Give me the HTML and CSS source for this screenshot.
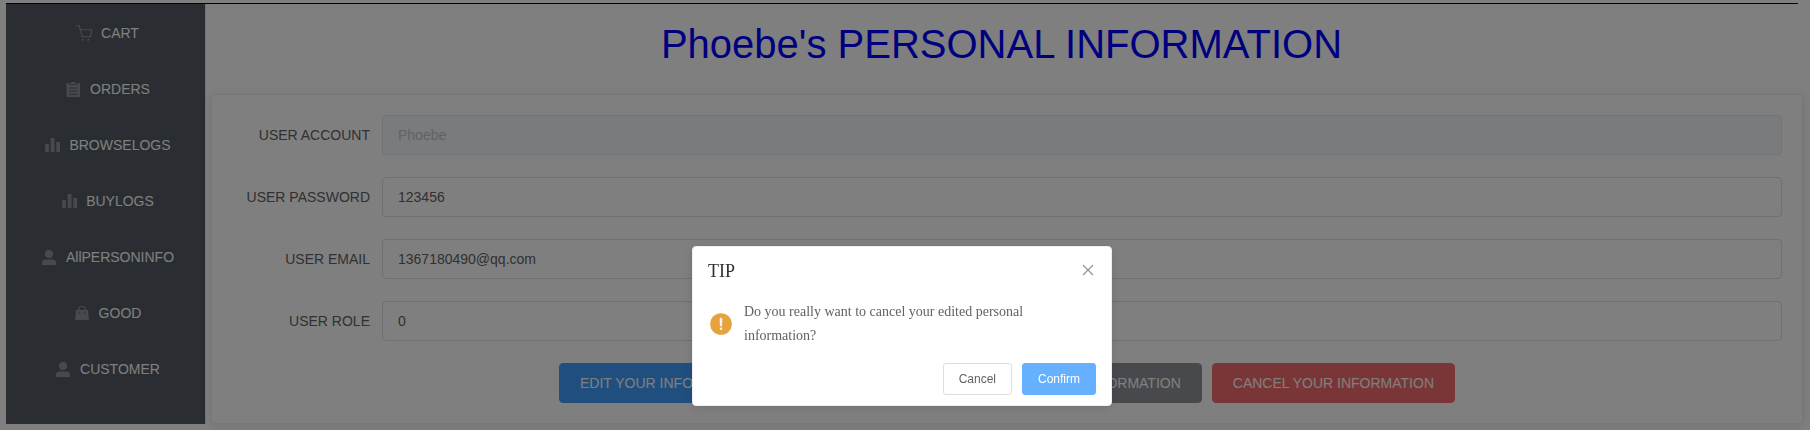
FILE: index.html
```html
<!DOCTYPE html>
<html lang="en">
<head>
<meta charset="utf-8">
<title>Personal Information</title>
<link rel="stylesheet" href="styles.css">
</head>
<body>
<svg class="sprite" aria-hidden="true">
  <symbol id="cart" viewBox="0 0 24 24"><path d="M4 5.800h3.200l3.100 11h8.100l1.400-7H8.400" fill="none" stroke="currentColor" stroke-width="1.100"/><circle cx="10.900" cy="19.800" r="1" fill="currentColor"/><circle cx="16.400" cy="19.800" r="1" fill="currentColor"/></symbol>
  <symbol id="order" viewBox="0 0 24 24"><path fill="currentColor" fill-rule="evenodd" d="M6.500 7H8v2h8.500V7H18q1 0 1 1v12q0 1-1 1H6.500q-1 0-1-1V8q0-1 1-1zM8 11.500v1h8.500v-1zM8 14.500v1h8.500v-1zM8 17.700v1h8.500v-1z"/><path fill="currentColor" d="M9 7h1.500V6h3.500v1h1.500v1.200H9z"/></symbol>
  <symbol id="bars" viewBox="0 0 24 24"><path fill="currentColor" d="M5.200 12h3.700v8H5.200zM10.700 6h3.800v14h-3.800zM16.300 10H20v10h-3.700z"/></symbol>
  <symbol id="user" viewBox="0 0 24 24"><circle cx="12" cy="10" r="4" fill="currentColor"/><path fill="currentColor" d="M5 20.500v-1.700Q5 15.500 8.300 15.500h7.400Q19 15.500 19 18.800v1.700q0 .5-.5.5h-13q-.5 0-.5-.5z"/></symbol>
  <symbol id="bag" viewBox="0 0 24 24"><path fill="currentColor" fill-rule="evenodd" d="M6 10h12l.8 10H5.200zM8.500 11.500v2h1v-2zM14.500 11.500v2h1v-2z"/><path d="M8.800 10V9.200a3.200 2.700 0 0 1 6.400 0V10" fill="none" stroke="currentColor" stroke-width="1.100"/></symbol>
</svg>
<div class="page">
  <div class="topline"></div>
  <div class="layout">
    <nav class="menu">
      <a class="menu-item"><svg class="icon"><use href="#cart"/></svg>CART</a>
      <a class="menu-item"><svg class="icon"><use href="#order"/></svg>ORDERS</a>
      <a class="menu-item"><svg class="icon"><use href="#bars"/></svg>BROWSELOGS</a>
      <a class="menu-item"><svg class="icon"><use href="#bars"/></svg>BUYLOGS</a>
      <a class="menu-item"><svg class="icon"><use href="#user"/></svg>AllPERSONINFO</a>
      <a class="menu-item"><svg class="icon"><use href="#bag"/></svg>GOOD</a>
      <a class="menu-item"><svg class="icon"><use href="#user"/></svg>CUSTOMER</a>
    </nav>
    <main class="main">
      <h1 class="title">Phoebe's PERSONAL INFORMATION</h1>
      <section class="card">
        <div class="row"><label class="label">USER ACCOUNT</label><div class="field disabled">Phoebe</div></div>
        <div class="row"><label class="label">USER PASSWORD</label><div class="field">123456</div></div>
        <div class="row"><label class="label">USER EMAIL</label><div class="field">1367180490@qq.com</div></div>
        <div class="row"><label class="label">USER ROLE</label><div class="field">0</div></div>
        <div class="actions">
          <button class="btn primary">EDIT YOUR INFORMATION</button>
          <button class="btn info">RESET YOUR INFORMATION</button>
          <button class="btn danger">CANCEL YOUR INFORMATION</button>
        </div>
      </section>
    </main>
  </div>
</div>
<div class="overlay">
  <div class="dialog">
    <div class="dialog-header">
      <span>TIP</span>
      <svg class="close" viewBox="0 0 16 16"><path d="M3 3l10 10M13 3L3 13" fill="none" stroke="currentColor" stroke-width="1.200"/></svg>
    </div>
    <div class="dialog-content">
      <svg class="warning" viewBox="0 0 24 24"><circle cx="13" cy="12" r="10.800" fill="#e6a23c"/><path d="M12 6.500q1-1 2 0l-.3 7.500h-1.400z" fill="#fff" stroke="#fff" stroke-width=".6"/><circle cx="13" cy="16.700" r="1.200" fill="#fff"/></svg>
      <p class="message">Do you really want to cancel your edited personal information?</p>
    </div>
    <div class="dialog-buttons">
      <button class="btn small">Cancel</button>
      <button class="btn small confirm">Confirm</button>
    </div>
  </div>
</div>
</body>
</html>
```
FILE: styles.css
```css
* { box-sizing: border-box; }
body {
  margin: 0;
  height: 430px;
  overflow: hidden;
  background: #fff;
  font-family: "Liberation Sans", Arial, sans-serif;
  font-size: 14px;
}
.sprite { display: none; }
.page { padding: 3px 7px 0 6px; }
.topline { width: 1792px; height: 1px; background: #000; }
.layout { display: flex; height: 420px; }
.menu {
  width: 200px;
  background: #545c64;
  border-right: 1px solid #e6e6e6;
}
.menu-item {
  display: flex;
  justify-content: center;
  align-items: center;
  height: 56px;
  padding-top: 2px;
  color: #fff;
}
.icon { width: 24px; height: 24px; margin: 0 5px 2px 0; color: #909399; }
.main { flex: 1; padding-left: 5px; }
.title {
  margin: 0;
  padding-right: 11px;
  height: 90px;
  line-height: 80px;
  text-align: center;
  font-size: 40px;
  font-weight: 400;
  color: #00f;
}
.card {
  height: 330px;
  padding: 20px;
  background: #fff;
  border: 1px solid #ebeef5;
  border-radius: 4px;
  box-shadow: 0 2px 12px rgba(0, 0, 0, .1);
  color: #606266;
}
.row { display: flex; height: 40px; margin-bottom: 22px; line-height: 40px; }
.label { width: 150px; padding-right: 12px; text-align: right; }
.field {
  flex: 1;
  padding: 0 15px;
  line-height: 38px;
  border: 1px solid #dcdfe6;
  border-radius: 4px;
}
.disabled { background: #f5f7fa; border-color: #e4e7ed; color: #c0c4cc; }
.actions { display: flex; gap: 10px; width: 896px; margin: 0 auto; }
.btn {
  height: 40px;
  padding: 0 20px;
  border: 1px solid #dcdfe6;
  border-radius: 4px;
  font: 14px "Liberation Sans", Arial, sans-serif;
  color: #fff;
  white-space: nowrap;
}
.primary { margin-right: auto; background: #409eff; border-color: #409eff; }
.info { background: #909399; border-color: #909399; }
.danger { background: #f56c6c; border-color: #f56c6c; }
.overlay {
  position: fixed;
  inset: 0;
  display: flex;
  justify-content: center;
  align-items: flex-start;
  padding: 246px 6px 0 0;
  background: rgba(0, 0, 0, .5);
}
.dialog {
  width: 420px;
  height: 160px;
  background: #fff;
  border: 1px solid #ebeef5;
  border-radius: 4px;
  box-shadow: 0 2px 12px rgba(0, 0, 0, .1);
  font-family: "Liberation Serif", "Times New Roman", serif;
}
.dialog-header {
  display: flex;
  justify-content: space-between;
  padding: 15px 15px 10px;
  font-size: 18px;
  line-height: 18px;
  color: #303133;
}
.close { width: 16px; height: 16px; color: #909399; }
.dialog-content {
  display: flex;
  align-items: center;
  gap: 12px;
  padding: 10px 15px;
  color: #606266;
}
.warning { flex: none; width: 24px; height: 24px; }
.message { margin: 0; padding-right: 12px; line-height: 24px; }
.dialog-buttons { display: flex; justify-content: flex-end; gap: 10px; padding: 5px 15px 0; }
.small { height: 32px; padding: 0 15px; border-radius: 3px; font-size: 12px; background: #fff; color: #606266; }
.confirm { background: #66b1ff; border-color: #66b1ff; color: #fff; }
```
